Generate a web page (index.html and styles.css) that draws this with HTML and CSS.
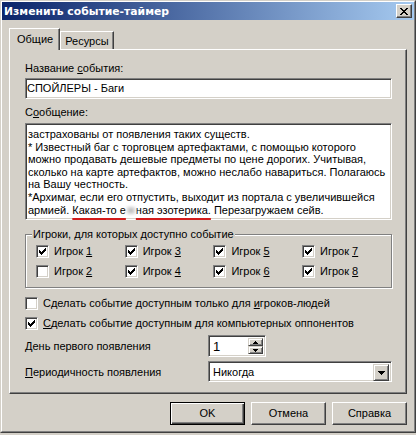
FILE: index.html
```html
<!DOCTYPE html>
<html lang="ru">
<head>
<meta charset="utf-8">
<title>Изменить событие-таймер</title>
<link rel="stylesheet" href="styles.css">
</head>
<body>
<div class="window">
  <div class="frame">
    <div class="titlebar">
      <span class="title">Изменить событие-таймер</span>
      <span class="close"><svg width="8" height="7" viewBox="0 0 8 7" shape-rendering="crispEdges"><path d="M0 0h2v1H0zM6 0h2v1H6zM1 1h2v1H1zM5 1h2v1H5zM2 2h4v1H2zM3 3h2v1H3zM2 4h4v1H2zM1 5h2v1H1zM5 5h2v1H5zM0 6h2v1H0zM6 6h2v1H6z" fill="#000"/></svg></span>
    </div>
    <div class="content">
      <div class="tabs">
        <div class="tab active">Общие</div>
        <div class="tab">Ресурсы</div>
      </div>
      <div class="panel">
        <div class="label">Название <u>с</u>обытия:</div>
        <div class="field name">СПОЙЛЕРЫ - Баги</div>
        <div class="label msg-label">С<u>о</u>общение:</div>
        <div class="field memo">
          <div>застрахованы от появления таких существ.</div>
          <div>* Известный баг с торговцем артефактами, с помощью которого</div>
          <div>можно продавать дешевые предметы по цене дорогих. Учитывая,</div>
          <div>сколько на карте артефактов, можно неслабо навариться. Полагаюсь</div>
          <div>на Вашу честность.</div>
          <div>*Архимаг, если его отпустить, выходит из портала с увеличившейся</div>
          <div>армией. <span class="mark">Какая-то е<span class="blur"></span>ная эзотерика.</span> Перезагружаем сейв.</div>
        </div>
        <fieldset class="group">
          <legend>Игроки, для которых доступно событие</legend>
          <div class="grid">
            <div class="check"><span class="cb"><svg width="7" height="7" viewBox="0 0 7 7" shape-rendering="crispEdges"><path d="M6 0h1v1H6zM5 1h2v1H5zM0 2h1v1H0zM4 2h3v1H4zM0 3h2v1H0zM3 3h3v1H3zM0 4h5v1H0zM1 5h3v1H1zM2 6h1v1H2z" fill="#000"/></svg></span><span>Игрок <u>1</u></span></div>
            <div class="check"><span class="cb"><svg width="7" height="7" viewBox="0 0 7 7" shape-rendering="crispEdges"><path d="M6 0h1v1H6zM5 1h2v1H5zM0 2h1v1H0zM4 2h3v1H4zM0 3h2v1H0zM3 3h3v1H3zM0 4h5v1H0zM1 5h3v1H1zM2 6h1v1H2z" fill="#000"/></svg></span><span>Игрок <u>3</u></span></div>
            <div class="check"><span class="cb"><svg width="7" height="7" viewBox="0 0 7 7" shape-rendering="crispEdges"><path d="M6 0h1v1H6zM5 1h2v1H5zM0 2h1v1H0zM4 2h3v1H4zM0 3h2v1H0zM3 3h3v1H3zM0 4h5v1H0zM1 5h3v1H1zM2 6h1v1H2z" fill="#000"/></svg></span><span>Игрок <u>5</u></span></div>
            <div class="check"><span class="cb"><svg width="7" height="7" viewBox="0 0 7 7" shape-rendering="crispEdges"><path d="M6 0h1v1H6zM5 1h2v1H5zM0 2h1v1H0zM4 2h3v1H4zM0 3h2v1H0zM3 3h3v1H3zM0 4h5v1H0zM1 5h3v1H1zM2 6h1v1H2z" fill="#000"/></svg></span><span>Игрок <u>7</u></span></div>
            <div class="check"><span class="cb"></span><span>Игрок <u>2</u></span></div>
            <div class="check"><span class="cb"><svg width="7" height="7" viewBox="0 0 7 7" shape-rendering="crispEdges"><path d="M6 0h1v1H6zM5 1h2v1H5zM0 2h1v1H0zM4 2h3v1H4zM0 3h2v1H0zM3 3h3v1H3zM0 4h5v1H0zM1 5h3v1H1zM2 6h1v1H2z" fill="#000"/></svg></span><span>Игрок <u>4</u></span></div>
            <div class="check"><span class="cb"><svg width="7" height="7" viewBox="0 0 7 7" shape-rendering="crispEdges"><path d="M6 0h1v1H6zM5 1h2v1H5zM0 2h1v1H0zM4 2h3v1H4zM0 3h2v1H0zM3 3h3v1H3zM0 4h5v1H0zM1 5h3v1H1zM2 6h1v1H2z" fill="#000"/></svg></span><span>Игрок <u>6</u></span></div>
            <div class="check"><span class="cb"><svg width="7" height="7" viewBox="0 0 7 7" shape-rendering="crispEdges"><path d="M6 0h1v1H6zM5 1h2v1H5zM0 2h1v1H0zM4 2h3v1H4zM0 3h2v1H0zM3 3h3v1H3zM0 4h5v1H0zM1 5h3v1H1zM2 6h1v1H2z" fill="#000"/></svg></span><span>Игрок <u>8</u></span></div>
          </div>
        </fieldset>
        <div class="check opt1"><span class="cb"></span><span>Сделать событие доступным только для <u>и</u>гроков-людей</span></div>
        <div class="check opt2"><span class="cb"><svg width="7" height="7" viewBox="0 0 7 7" shape-rendering="crispEdges"><path d="M6 0h1v1H6zM5 1h2v1H5zM0 2h1v1H0zM4 2h3v1H4zM0 3h2v1H0zM3 3h3v1H3zM0 4h5v1H0zM1 5h3v1H1zM2 6h1v1H2z" fill="#000"/></svg></span><span><u>С</u>делать событие доступным для компьютерных оппонентов</span></div>
        <div class="row day">
          <span class="lbl"><u>Д</u>ень первого появления</span>
          <div class="field spin">
            <span class="spin-val">1</span>
            <span class="spin-btns">
              <span class="sbtn"><svg width="5" height="3" viewBox="0 0 5 3" shape-rendering="crispEdges"><path d="M2 0h1v1H2zM1 1h3v1H1zM0 2h5v1H0z" fill="#000"/></svg></span>
              <span class="sbtn"><svg width="5" height="3" viewBox="0 0 5 3" shape-rendering="crispEdges"><path d="M0 0h5v1H0zM1 1h3v1H1zM2 2h1v1H2z" fill="#000"/></svg></span>
            </span>
          </div>
        </div>
        <div class="row period">
          <span class="lbl"><u>П</u>ериодичность появления</span>
          <div class="field select">
            <span class="sel-val">Никогда</span>
            <span class="arrow"><svg width="7" height="4" viewBox="0 0 7 4" shape-rendering="crispEdges"><path d="M0 0h7v1H0zM1 1h5v1H1zM2 2h3v1H2zM3 3h1v1H3z" fill="#000"/></svg></span>
          </div>
        </div>
      </div>
      <div class="buttons">
        <div class="btn default">OK</div>
        <div class="btn">Отмена</div>
        <div class="btn">Справка</div>
      </div>
    </div>
  </div>
</div>
</body>
</html>
```

FILE: styles.css
```css
* { box-sizing: border-box; }
html, body { margin: 0; padding: 0; }
body {
  background: #d4d0c8;
  font-family: "Liberation Sans", Arial, sans-serif;
  font-size: 11px;
  color: #000;
}
u { text-decoration: underline; text-underline-offset: 1px; }

.window {
  width: 416px;
  height: 433px;
  border: 1px solid;
  border-color: #d4d0c8 #404040 #404040 #d4d0c8;
  background: #d4d0c8;
}
.frame {
  height: 100%;
  border: 1px solid;
  border-color: #fff #808080 #808080 #fff;
  display: flex;
  flex-direction: column;
}
.titlebar {
  height: 18px;
  flex: none;
  background: linear-gradient(to right, #0a246a, #a6caf0);
  display: flex;
  align-items: center;
  justify-content: space-between;
  padding: 0 2px 0 2px;
}
.title {
  color: #fff;
  font-family: "DejaVu Sans", "Liberation Sans", sans-serif;
  font-weight: bold;
  font-size: 10.8px;
  line-height: 14px;
  padding-top: 1px;
}
.close {
  width: 16px;
  height: 14px;
  background: #d4d0c8;
  border: 1px solid;
  border-color: #fff #404040 #404040 #fff;
  box-shadow: inset -1px -1px #808080;
  display: flex;
  align-items: center;
  justify-content: center;
}
.content { padding: 8px 7px 0; }

.tabs {
  display: flex;
  align-items: flex-end;
  height: 21px;
  position: relative;
  z-index: 1;
}
.tab {
  height: 18px;
  line-height: 17px;
  padding: 1px 4px 0;
  border: 1px solid;
  border-bottom: none;
  border-color: #fff #404040 #fff #fff;
  box-shadow: inset -1px 0 #808080;
  background: #d4d0c8;
}
.tab.active {
  height: 22px;
  line-height: 20px;
  margin-bottom: -1px;
  padding: 0 6px 0 7px;
}

.panel {
  border: 1px solid;
  border-color: #fff #404040 #404040 #fff;
  box-shadow: inset -1px -1px #808080;
  padding: 12px 14px 11px 15px;
}
.label { line-height: 13px; }
.msg-label { margin-top: 7px; }

.field {
  background: #fff;
  border: 1px solid;
  border-color: #808080 #fff #fff #808080;
  box-shadow: inset 1px 1px #404040, inset -1px -1px #d4d0c8;
}
.name {
  margin-top: 3px;
  height: 21px;
  line-height: 18px;
  padding: 0 1px;
}
.memo {
  margin-top: 4px;
  height: 97px;
  padding: 4px 2px 0;
  line-height: 12.6px;
  white-space: nowrap;
  overflow: visible;
}
.mark {
  text-decoration-line: underline;
  text-decoration-color: #d21c1c;
  text-decoration-thickness: 2px;
  text-underline-offset: 4px;
}
.blur {
  display: inline-block;
  width: 10px;
  height: 9px;
  vertical-align: -1px;
  background: radial-gradient(#b4b4b4, #eee 70%, #fff);
  filter: blur(1.2px);
}

.group {
  margin: 8px 0 0;
  padding: 4px 0 9px 10px;
  min-width: 0;
  border: 1px solid #808080;
  box-shadow: inset 1px 1px #fff, 1px 1px #fff;
}
.group legend {
  padding: 0 1px;
  margin-left: -4px;
  line-height: 13px;
  background: #d4d0c8;
}
.grid {
  display: grid;
  grid-template-columns: repeat(4, 88.7px);
  row-gap: 7px;
}
.check {
  display: flex;
  align-items: center;
  gap: 5px;
  height: 13px;
  line-height: 13px;
  white-space: nowrap;
}
.cb {
  flex: none;
  width: 13px;
  height: 13px;
  background: #fff;
  border: 1px solid;
  border-color: #808080 #fff #fff #808080;
  box-shadow: inset 1px 1px #404040, inset -1px -1px #d4d0c8;
  display: flex;
  align-items: center;
  justify-content: center;
}
.opt1 { margin-top: 9px; }
.opt2 { margin-top: 7px; }

.row { display: flex; align-items: center; }
.lbl { width: 183px; flex: none; }
.day { margin-top: 5px; }
.period { margin-top: 4px; }
.spin {
  width: 58px;
  height: 22px;
  display: flex;
  padding: 2px;
}
.spin-val {
  flex: 1;
  font-size: 13px;
  line-height: 18px;
  padding-left: 2px;
}
.spin-btns {
  display: flex;
  flex-direction: column;
  width: 15px;
}
.sbtn {
  height: 9px;
  background: #d4d0c8;
  border: 1px solid;
  border-color: #d4d0c8 #404040 #404040 #d4d0c8;
  box-shadow: inset 1px 1px #fff, inset -1px -1px #808080;
  display: flex;
  align-items: center;
  justify-content: center;
}
.select {
  flex: 1;
  height: 21px;
  display: flex;
  padding: 2px;
}
.sel-val {
  flex: 1;
  line-height: 17px;
  padding-left: 2px;
}
.arrow {
  width: 16px;
  height: 17px;
  background: #d4d0c8;
  border: 1px solid;
  border-color: #d4d0c8 #404040 #404040 #d4d0c8;
  box-shadow: inset 1px 1px #fff, inset -1px -1px #808080;
  display: flex;
  align-items: center;
  justify-content: center;
}

.buttons {
  display: flex;
  justify-content: flex-end;
  gap: 6px;
  margin-top: 8px;
}
.btn {
  width: 75px;
  height: 23px;
  line-height: 21px;
  text-align: center;
  border: 1px solid;
  border-color: #fff #404040 #404040 #fff;
  box-shadow: inset -1px -1px #808080;
}
.btn.default {
  border-color: #000;
  box-shadow: inset 1px 1px #fff, inset -1px -1px #404040, inset -2px -2px #808080;
}
```
